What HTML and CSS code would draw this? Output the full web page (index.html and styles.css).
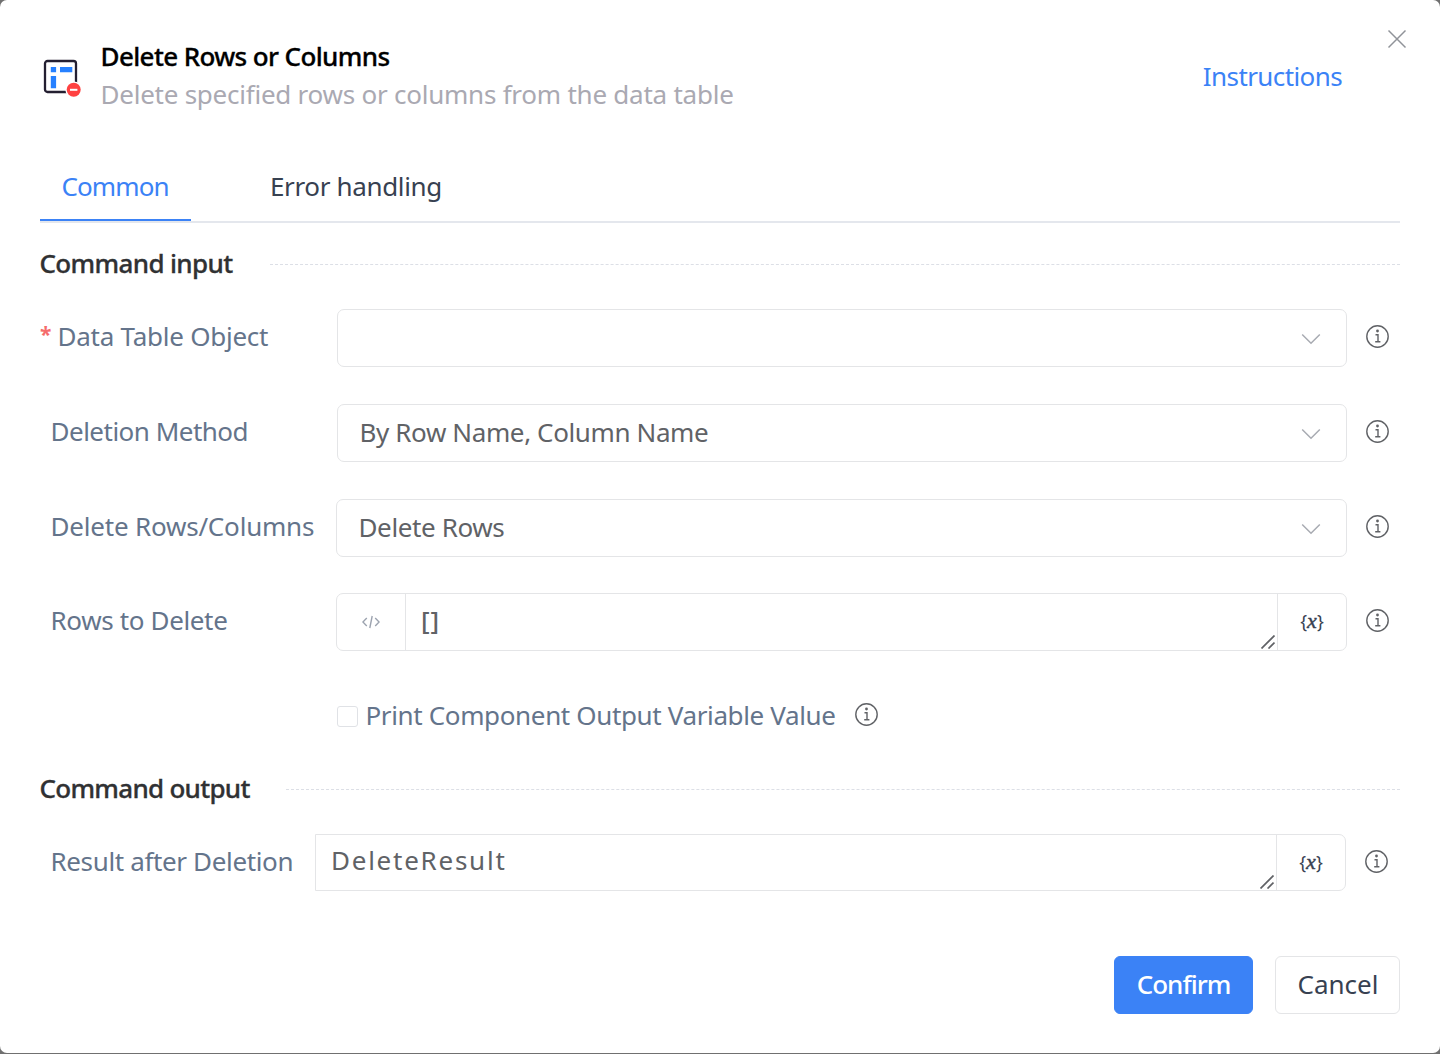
FILE: index.html
```html
<!DOCTYPE html>
<html lang="en">
<head>
<meta charset="utf-8">
<title>Delete Rows or Columns</title>
<link rel="stylesheet" href="styles.css">
</head>
<body>
<svg class="sprite" aria-hidden="true">
  <symbol id="info" viewBox="0 0 23 23"><circle cx="11.500" cy="11.500" r="10.700" fill="none" stroke="currentColor" stroke-width="1.400"/><circle cx="11.500" cy="6" r="1.400" fill="currentColor"/><path d="M9.500 9.700h2.500v7M9.200 16.700h5.200" fill="none" stroke="currentColor" stroke-width="1.400"/></symbol>
  <symbol id="chevron" viewBox="0 0 20 12"><path d="M1.200 1.500 10 10.300l8.800-8.800" fill="none" stroke="currentColor" stroke-width="1.500"/></symbol>
  <symbol id="grip" viewBox="0 0 14 14"><path d="M.5 13.500 13.500.5M7.500 13.500l6-6" fill="none" stroke="currentColor" stroke-width="1.700"/></symbol>
</svg>
<main class="dialog">
  <header class="header">
    <svg class="logo" viewBox="0 0 40 42"><rect x="3" y="3" width="31" height="31" rx="2.500" fill="#fff" stroke="#241f31" stroke-width="2.300"/><path d="M8.800 9h5.300v5.300H8.800zM18 9h12.300v5.300H18zM8.800 18h5.300v12.300H8.800z" fill="#2680ff"/><circle cx="31.700" cy="31.800" r="8.300" fill="#fff"/><circle cx="31.700" cy="31.800" r="7" fill="#ff4141"/><path d="M28 31.800h7.400" stroke="#fff" stroke-width="2"/></svg>
    <div class="heading">
      <h1 class="title">Delete Rows or Columns</h1>
      <p class="description">Delete specified rows or columns from the data table</p>
    </div>
    <a class="instructions">Instructions</a>
    <svg class="close" viewBox="0 0 20 20"><path d="M1.500 1.500l17 17M18.500 1.500l-17 17" fill="none" stroke="currentColor" stroke-width="1.500"/></svg>
  </header>
  <nav class="tabs">
    <a class="tab tab-active">Common</a>
    <a class="tab tab-error">Error handling</a>
  </nav>
  <h2 class="section section-input"><span class="section-name">Command input</span></h2>
  <div class="row">
    <label class="label label-required"><span class="star">*</span><span class="object">Data Table Object</span></label>
    <div class="box select"><span></span><svg class="chevron"><use href="#chevron"/></svg></div>
    <svg class="info"><use href="#info"/></svg>
  </div>
  <div class="row">
    <label class="label"><span class="method">Deletion Method</span></label>
    <div class="box select"><span class="option">By Row Name, Column Name</span><svg class="chevron"><use href="#chevron"/></svg></div>
    <svg class="info"><use href="#info"/></svg>
  </div>
  <div class="row row-wide">
    <label class="label"><span class="which">Delete Rows/Columns</span></label>
    <div class="box select"><span class="option">Delete Rows</span><svg class="chevron"><use href="#chevron"/></svg></div>
    <svg class="info"><use href="#info"/></svg>
  </div>
  <div class="row row-wide row-code">
    <label class="label">Rows to Delete</label>
    <div class="box group">
      <span class="code"><svg class="code-icon" viewBox="0 0 18 14"><path d="M4.800 3 .9 7l3.900 4M13.200 3l3.900 4-3.900 4M10.200 1 7.800 13" fill="none" stroke="currentColor" stroke-width="1.400"/></svg></span>
      <span class="value"><span class="brackets">[]</span><svg class="grip"><use href="#grip"/></svg></span>
      <span class="variable">{<i class="variable-x">x</i>}</span>
    </div>
    <svg class="info"><use href="#info"/></svg>
  </div>
  <div class="check-row">
    <span class="checkbox"></span><span class="print">Print Component Output Variable Value</span>
    <svg class="info"><use href="#info"/></svg>
  </div>
  <h2 class="section section-output"><span class="section-name">Command output</span></h2>
  <div class="row row-output">
    <label class="label">Result after Deletion</label>
    <div class="box group">
      <span class="value"><span class="result-value">DeleteResult</span><svg class="grip"><use href="#grip"/></svg></span>
      <span class="variable">{<i class="variable-x">x</i>}</span>
    </div>
    <svg class="info"><use href="#info"/></svg>
  </div>
  <footer class="footer">
    <button class="button button-primary">Confirm</button>
    <button class="button">Cancel</button>
  </footer>
</main>
</body>
</html>
```
FILE: styles.css
```css
* { box-sizing: border-box; }
body { margin: 0; height: 1054px; background: #707070; font-family: "Noto Sans", sans-serif; font-size: 26px; line-height: 36px; color: #606266; overflow: hidden; white-space: nowrap; }
.sprite { display: none; }
svg { display: block; flex: none; }
.dialog { height: 1053px; padding: 0 40px; background: #fff; border-radius: 7px; }
.header { display: flex; height: 153px; }
.logo { width: 40px; height: 42px; margin: 58px 0 0 2px; }
.heading { margin: 38px 0 0 18.5px; flex: 1; }
.title { margin: 0; font-size: 26px; font-weight: 500; line-height: 37px; letter-spacing: -0.62px; color: #000; -webkit-text-stroke: 0.3px #000; }
.description { margin: 0; line-height: 38px; letter-spacing: -0.24px; color: #aaa9b2; }
.instructions { margin-top: 58px; letter-spacing: -0.6px; color: #3b82f6; }
.close { width: 20px; height: 20px; margin: 29px -6.5px 0 44.5px; color: #909399; }
.tabs { display: flex; height: 70px; border-bottom: 2px solid #e4e7ed; }
.tab { height: 68px; padding-top: 15px; color: #374151; }
.tab-active { width: 151px; padding-left: 21.5px; letter-spacing: -0.9px; color: #3b82f6; border-bottom: 2px solid #3b82f6; }
.tab-error { margin-left: 79px; letter-spacing: -0.35px; }
.section { display: flex; align-items: center; height: 36px; margin: 23px 0 27px; font-size: 26px; font-weight: 500; color: #303133; -webkit-text-stroke: 0.3px #303133; }
.section-name { width: 193px; margin: -2px 0 0 -0.5px; letter-spacing: -0.65px; }
.section::after { content: ""; flex: 1; margin-left: 37px; border-top: 1px dashed #dcdfe6; }
.section-output .section-name { width: 209px; letter-spacing: -0.72px; }
.row { display: flex; align-items: center; height: 58px; margin-bottom: 37px; }
.label { width: 297px; padding-left: 10.5px; color: #64748b; flex: none; margin-top: -4px; letter-spacing: -0.36px; }
.label-required { display: flex; padding-left: 0; }
.star { width: 17.5px; margin-top: -2px; font-size: 21px; font-weight: 700; color: #f56c6c; }
.object { letter-spacing: -0.25px; }
.method { letter-spacing: -0.5px; }
.which { letter-spacing: -0.2px; }
.row-wide .label { width: 296px; }
.box { display: flex; flex: 1; height: 58px; border: 1px solid #e4e5e7; border-radius: 7px; }
.select { align-items: center; justify-content: space-between; padding: 0 25px 0 21.5px; }
.option { margin-top: -2px; letter-spacing: -0.38px; }
.chevron { width: 20px; height: 12px; margin-top: 2px; color: #a8abb2; }
.info { width: 23px; height: 23px; margin: -3px 11px 0 19px; color: #606266; }
.row-code { margin-top: -1px; }
.code { display: flex; align-items: center; justify-content: center; width: 69px; border-right: 1px solid #e4e5e7; color: #9ca3af; }
.code-icon { width: 18px; height: 14px; }
.value { position: relative; flex: 1; padding: 8px 0 0 15px; }
.brackets { letter-spacing: 1px; font-weight: 500; }
.result-value { letter-spacing: 1.75px; }
.row-output .value { padding-top: 7px; }
.grip { position: absolute; right: 2px; bottom: 1px; width: 14px; height: 14px; }
.variable { display: flex; align-items: center; justify-content: center; width: 69px; padding-bottom: 2px; border-left: 1px solid #e4e5e7; font-size: 18px; color: #374151; }
.variable-x { font-family: "Liberation Serif", serif; font-size: 22px; -webkit-text-stroke: 0.4px #374151; }
.check-row { display: flex; align-items: center; height: 36px; margin: 47px 0 37px 297px; color: #64748b; }
.checkbox { width: 21px; height: 21px; margin-right: 7.5px; border: 1px solid #e0e2e6; border-radius: 3px; }
.print { margin-top: -2px; letter-spacing: -0.36px; }
.section-output { margin: 37px 0 27px; }
.row-output { height: 57px; margin-bottom: 65px; }
.row-output .label { width: 275px; letter-spacing: -0.36px; }
.row-output .box { height: 57px; border-radius: 0 7px 7px 0; }
.row-output .info { margin-top: -2px; margin-right: 12px; }
.footer { display: flex; justify-content: flex-end; gap: 22px; }
.button { width: 125px; height: 58px; padding: 0 0 2px 1px; border: 1px solid #e4e5e7; border-radius: 6px; background: #fff; font: inherit; color: #374151; }
.button-primary { width: 139px; padding-left: 0; letter-spacing: -1px; background: #3b82f6; border-color: #3b82f6; color: #fff; font-weight: 500; }
```
